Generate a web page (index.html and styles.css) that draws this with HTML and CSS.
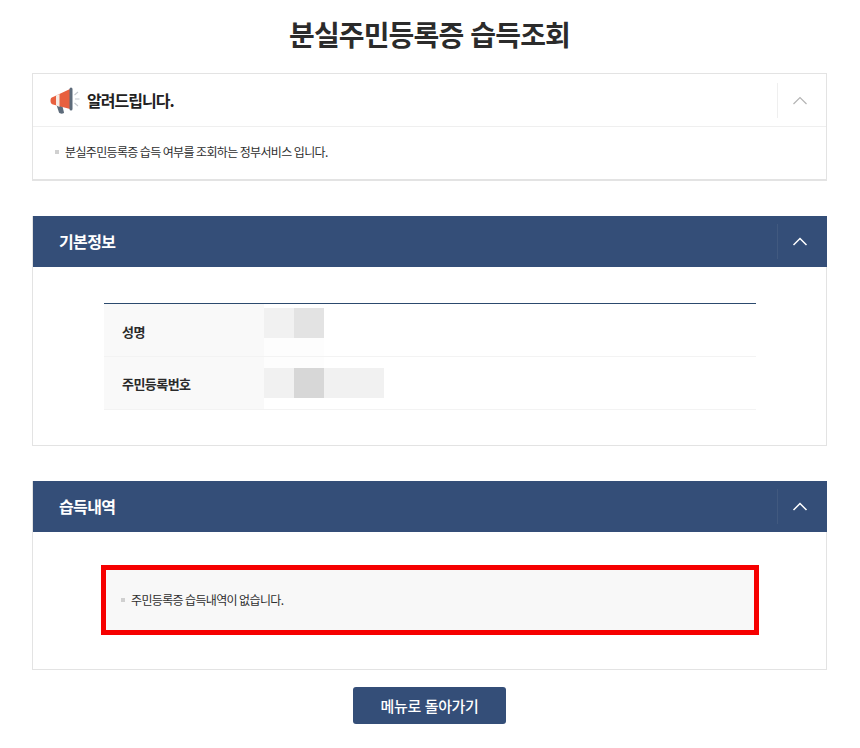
FILE: index.html
```html
<!DOCTYPE html>
<html lang="ko">
<head>
<meta charset="utf-8">
<title>분실주민등록증 습득조회</title>
<link rel="stylesheet" href="styles.css">
</head>
<body>
<main class="page">
  <h1 class="title">분실주민등록증 습득조회</h1>

  <section class="panel panel-notice">
    <header class="panel-head head-light">
      <div class="head-label">
        <svg class="megaphone" width="30" height="28" viewBox="0 0 30 28" aria-hidden="true">
          <path d="M6.500 19l6 1.500 1.500 6c.2 1.500-4.500 1.500-5 0z" fill="#5d6b7a"/>
          <path d="M3 11L20 3v20L3 18.500C1 18 .5 16.500.5 14.500S1 11.500 3 11z" fill="#e8603f"/>
          <path d="M6 9.600l3.500-1.700v13l-3.500-1.400z" fill="#f7ebe4"/>
          <rect x="19.500" y="1.500" width="3" height="23" rx="1.500" fill="#5d6b7a"/>
          <path d="M25 13h4.500M24.500 9l3.500-3M24.500 17l3.500 3" stroke="#c4c8cd" stroke-width="1.100" fill="none"/>
        </svg>
        <span class="notice-title">알려드립니다.</span>
      </div>
      <div class="toggle"><svg width="16" height="9" viewBox="0 0 16 9" aria-hidden="true"><path d="M1.500 8L8 1.500 14.500 8" fill="none" stroke="#b4b4b4" stroke-width="1.200"/></svg></div>
    </header>
    <div class="notice-body">
      <p class="bullet">분실주민등록증 습득 여부를 조회하는 정부서비스 입니다.</p>
    </div>
  </section>

  <section class="panel panel-info">
    <header class="panel-head head-dark">
      <h2 class="head-title">기본정보</h2>
      <div class="toggle"><svg width="16" height="9" viewBox="0 0 16 9" aria-hidden="true"><path d="M1.500 8L8 1.500 14.500 8" fill="none" stroke="#fff" stroke-width="1.500"/></svg></div>
    </header>
    <div class="info-body">
      <div class="info-table">
        <div class="info-row">
          <div class="info-th info-th-first">성명</div>
          <div class="info-td">
            <div class="blur-row"><i class="b1"></i><i class="b2"></i></div>
            <div class="faint-row"></div>
          </div>
        </div>
        <div class="info-row">
          <div class="info-th">주민등록번호</div>
          <div class="info-td">
            <div class="faint-row faint-top"></div>
            <div class="blur-row"><i class="b1"></i><i class="b3"></i><i class="b1"></i><i class="b1"></i></div>
          </div>
        </div>
      </div>
    </div>
  </section>

  <section class="panel panel-found">
    <header class="panel-head head-dark">
      <h2 class="head-title">습득내역</h2>
      <div class="toggle"><svg width="16" height="9" viewBox="0 0 16 9" aria-hidden="true"><path d="M1.500 8L8 1.500 14.500 8" fill="none" stroke="#fff" stroke-width="1.500"/></svg></div>
    </header>
    <div class="found-body">
      <div class="found-box">
        <p class="bullet">주민등록증 습득내역이 없습니다.</p>
      </div>
    </div>
  </section>

  <div class="actions"><a class="back-btn" href="#">메뉴로 돌아가기</a></div>
</main>
</body>
</html>
```
FILE: styles.css
```css
* { box-sizing: border-box; }
html, body { margin: 0; padding: 0; background: #fff; }
body {
  font-family: "Noto Sans CJK KR", "Noto Sans", sans-serif;
  color: #222;
  overflow: hidden;
}
.page { width: 860px; height: 748px; padding: 0 33px 0 32px; }
.title {
  margin: 0;
  height: 73px;
  padding-top: 12px;
  text-align: center;
  font-size: 28px;
  line-height: 44px;
  font-weight: 700;
  letter-spacing: -0.85px;
  color: #2b2b2b;
}
.panel { border: 1px solid #e3e3e3; }
.panel-notice { height: 108px; border-bottom-width: 2px; }
.panel-info { height: 230px; margin-top: 35px; }
.panel-found { height: 189px; margin-top: 35px; }
.panel-head { display: flex; align-items: center; justify-content: space-between; }
.head-light { height: 53px; border-bottom: 1px solid #efefef; padding-left: 17px; padding-right: 4px; }
.head-dark { height: 51px; margin: -1px -1px 0 0; background: #344e78; padding-left: 26px; padding-right: 5px; color: #fff; }
.head-label { display: flex; align-items: center; gap: 7px; }
.notice-title { font-size: 16px; font-weight: 700; letter-spacing: -0.95px; color: #222; margin-bottom: 1px; }
.head-title { margin: 0 0 2px; font-size: 16px; font-weight: 700; letter-spacing: -0.65px; color: #fff; }
.toggle { width: 45px; height: 35px; display: flex; align-items: center; justify-content: center; border-left: 1px solid #efefef; }
.head-dark .toggle { border-left-color: #41597f; }
.notice-body { padding: 15px 22px; }
.bullet {
  margin: 0;
  position: relative;
  padding-left: 10px;
  font-size: 12px;
  line-height: 20px;
  letter-spacing: -0.65px;
  word-spacing: -0.6px;
  color: #2e2e2e;
}
.bullet::before {
  content: "";
  position: absolute;
  left: 0;
  top: 8px;
  width: 4px;
  height: 4px;
  background: #d0d0d0;
}
.info-body { padding: 36px 70px 0 71px; }
.info-table { border-top: 1px solid #2c4a6e; }
.info-row { display: flex; height: 53px; border-bottom: 1px solid #f3f3f3; }
.info-th {
  width: 160px;
  background: #f9f9f9;
  padding-left: 18px;
  display: flex;
  align-items: center;
  font-size: 13px;
  font-weight: 700;
  letter-spacing: -0.55px;
  color: #2a2a2a;
}
.info-th-first { padding-top: 2px; }
.info-td { flex: 1; padding-top: 4px; }
.info-row + .info-row .info-td { padding-top: 0; }
.blur-row { display: flex; }
.blur-row i { display: block; width: 30px; height: 30px; }
.faint-row { width: 60px; height: 18px; background: #fdfdfd; }
.faint-top { height: 11px; }
.b1 { background: #f1f1f1; }
.b2 { background: #e3e3e3; }
.b3 { background: #d7d7d7; }
.found-body { padding: 33px 67px 0 68px; }
.found-box {
  height: 70px;
  border: 5px solid #f60000;
  background: #f8f8f8;
  padding: 20px 15px;
}
.actions { display: flex; justify-content: center; padding-top: 17px; padding-right: 1px; }
.back-btn {
  display: flex;
  align-items: center;
  justify-content: center;
  width: 153px;
  height: 37px;
  padding-left: 1px;
  border-radius: 3px;
  background: #344e78;
  color: #fff;
  font-size: 15px;
  font-weight: 500;
  letter-spacing: -0.35px;
  text-decoration: none;
}
```
